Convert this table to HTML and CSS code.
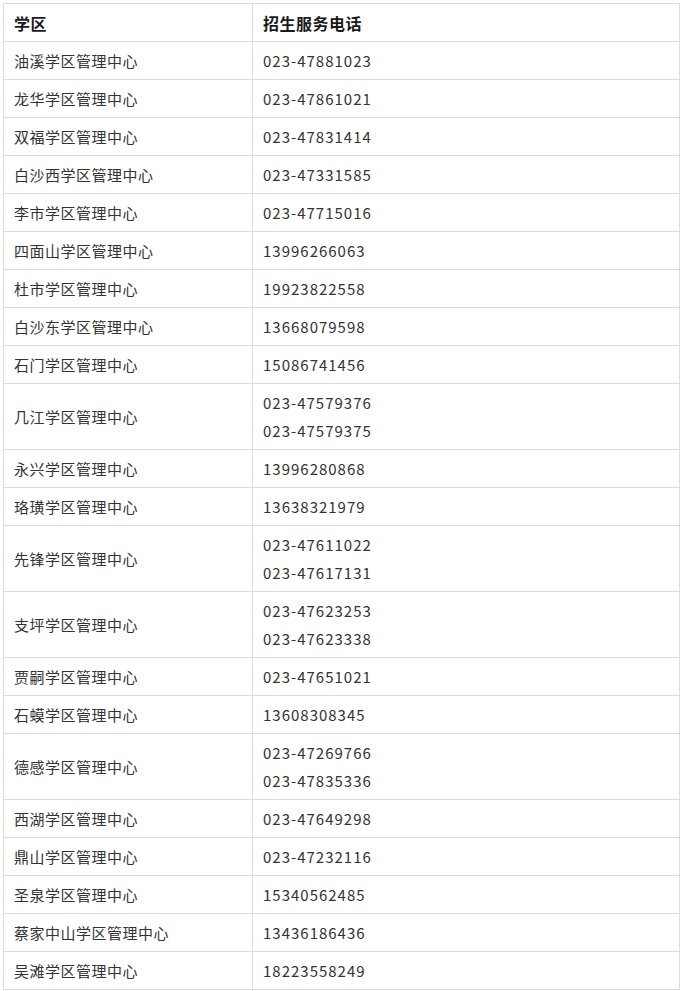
FILE: index.html
```html
<!DOCTYPE html>
<html lang="zh-CN">
<head>
<meta charset="utf-8">
<title>招生服务电话</title>
<link rel="stylesheet" href="styles.css">
</head>
<body>
<table class="tbl">
  <colgroup><col class="c1"><col class="c2"></colgroup>
  <thead>
    <tr><th>学区</th><th>招生服务电话</th></tr>
  </thead>
  <tbody>
    <tr><td>油溪学区管理中心</td><td class="tel">023-47881023</td></tr>
    <tr><td>龙华学区管理中心</td><td class="tel">023-47861021</td></tr>
    <tr><td>双福学区管理中心</td><td class="tel">023-47831414</td></tr>
    <tr><td>白沙西学区管理中心</td><td class="tel">023-47331585</td></tr>
    <tr><td>李市学区管理中心</td><td class="tel">023-47715016</td></tr>
    <tr><td>四面山学区管理中心</td><td class="tel">13996266063</td></tr>
    <tr><td>杜市学区管理中心</td><td class="tel">19923822558</td></tr>
    <tr><td>白沙东学区管理中心</td><td class="tel">13668079598</td></tr>
    <tr><td>石门学区管理中心</td><td class="tel">15086741456</td></tr>
    <tr><td>几江学区管理中心</td><td class="tel">023-47579376<br>023-47579375</td></tr>
    <tr><td>永兴学区管理中心</td><td class="tel">13996280868</td></tr>
    <tr><td>珞璜学区管理中心</td><td class="tel">13638321979</td></tr>
    <tr><td>先锋学区管理中心</td><td class="tel">023-47611022<br>023-47617131</td></tr>
    <tr><td>支坪学区管理中心</td><td class="tel">023-47623253<br>023-47623338</td></tr>
    <tr><td>贾嗣学区管理中心</td><td class="tel">023-47651021</td></tr>
    <tr><td>石蟆学区管理中心</td><td class="tel">13608308345</td></tr>
    <tr><td>德感学区管理中心</td><td class="tel">023-47269766<br>023-47835336</td></tr>
    <tr><td>西湖学区管理中心</td><td class="tel">023-47649298</td></tr>
    <tr><td>鼎山学区管理中心</td><td class="tel">023-47232116</td></tr>
    <tr><td>圣泉学区管理中心</td><td class="tel">15340562485</td></tr>
    <tr><td>蔡家中山学区管理中心</td><td class="tel">13436186436</td></tr>
    <tr><td>吴滩学区管理中心</td><td class="tel">18223558249</td></tr>
  </tbody>
</table>
</body>
</html>
```

FILE: styles.css
```css
html, body {
  background: #ffffff;
}
body {
  margin: 3px;
  font-family: "Noto Sans CJK SC", "Noto Sans", sans-serif;
  font-size: 15px;
  letter-spacing: 0.5px;
  color: #333333;
}
.tbl {
  border-collapse: collapse;
  width: 677px;
  table-layout: fixed;
}
.c1 { width: 249px; }
.tbl th,
.tbl td {
  border: 1px solid #dddddd;
  padding: 5px 10px 4px 10px;
  line-height: 28px;
  text-align: left;
  vertical-align: middle;
}
.tbl th {
  font-size: 16px;
  font-weight: bold;
  color: #1a1a1a;
}
.tbl .tel {
  letter-spacing: 1px;
}
```
